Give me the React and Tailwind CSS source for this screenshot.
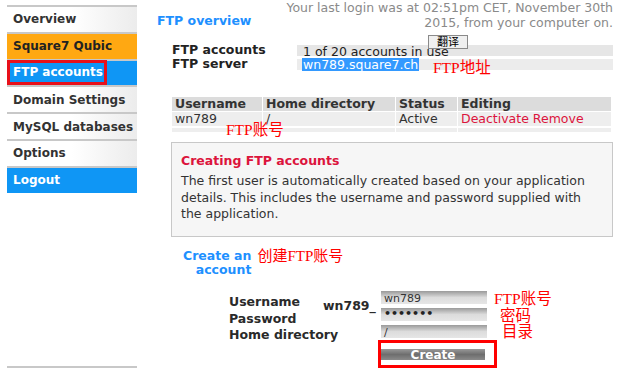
import React from "react";

const navItems = [
  { label: "Overview", tone: "plain" },
  { label: "Square7 Qubic", tone: "orange" },
  { label: "FTP accounts", tone: "blue", boxed: true },
  { label: "Domain Settings", tone: "plain" },
  { label: "MySQL databases", tone: "plain" },
  { label: "Options", tone: "plain" },
  { label: "Logout", tone: "blue" },
];

const toneClass = {
  plain: "bg-gradient-to-r from-white via-white to-[#ececec] text-[#333]",
  orange: "bg-[#ffa812] text-[#222]",
  blue: "bg-[#0f96f5] text-white",
};

const cjk = { fontFamily: '"Liberation Serif", "Noto Sans CJK SC", serif' };

export default function App() {
  return (
    <div
      className="relative w-[623px] h-[373px] overflow-hidden bg-white text-[13px] text-[#333]"
      style={{ fontFamily: '"DejaVu Sans", Verdana, sans-serif' }}
    >
      <div className="flex">
        {/* Sidebar */}
        <div className="ml-[7px] mt-[5px] w-[130px] shrink-0 border-b-2 border-[#c8c8c8]">
          {navItems.map((item) => (
            <div
              key={item.label}
              className={`h-[26.8px] border-t-2 border-[#c8c8c8] flex items-center pl-[6px] font-bold text-[12px] ${toneClass[item.tone]}`}
            >
              <span
                className={
                  item.boxed
                    ? "outline-[3px] outline outline-[#e8101a] -ml-[3px] pl-[3px] pr-[1px] leading-[19px]"
                    : ""
                }
              >
                {item.label}
              </span>
            </div>
          ))}
        </div>

        {/* Main */}
        <div className="relative flex-1 pl-[20px] pr-[10px]">
          <div className="flex items-end justify-between">
            <h1 className="text-[#1e90ff] font-bold text-[12.5px] mb-[-1px]">FTP overview</h1>
            <p className="text-right text-[#8a8a8a] leading-[15px] text-[12.5px]">
              Your last login was at 02:51pm CET, November 30th
              <br />
              2015, from your computer on.
            </p>
          </div>

          <div className="mt-[15px] ml-[15px] flex flex-col gap-[3px] text-[12.5px]">
            <div className="flex items-center h-[11px]">
              <span className="w-[125px] font-bold text-[#222]">FTP accounts</span>
              <div className="flex-1 bg-[#e6e6e6] h-[11px] leading-[13px] pl-[6px] text-[#222]">
                1 of 20 accounts in use
              </div>
            </div>
            <div className="flex items-center h-[11px]">
              <span className="w-[125px] font-bold text-[#222]">FTP server</span>
              <div className="flex-1 bg-[#ececec] h-[11px] leading-[13px] pl-[5px] flex">
                <span className="bg-[#3399ff] text-white px-[1px] leading-[13px] h-[13px] -mt-[1px]">
                  wn789.square7.ch
                </span>
              </div>
            </div>
          </div>

          <button className="absolute left-[291px] top-[35px] w-[40px] h-[14px] border border-[#8a8a8a] bg-[#f0f0f0] text-[11px] leading-[12px] text-black" style={cjk}>
            翻译
          </button>
          <span className="absolute left-[296px] top-[56px] text-[#ff0000] text-[15.5px]" style={cjk}>
            FTP地址
          </span>

          {/* Accounts table */}
          <div className="relative mt-[27px] ml-[15px] mr-[2px] text-[12.5px]">
            <div className="grid grid-cols-[90px_132px_61px_1fr] gap-x-[1px] leading-[14px]">
              <div className="bg-[#dcdcdc] font-bold pl-[3px]">Username</div>
              <div className="bg-[#dcdcdc] font-bold pl-[3px]">Home directory</div>
              <div className="bg-[#dcdcdc] font-bold pl-[3px]">Status</div>
              <div className="bg-[#dcdcdc] font-bold pl-[3px]">Editing</div>
              <div className="bg-[#eeeeee] pl-[3px] mt-[1px]">wn789</div>
              <div className="bg-[#eeeeee] pl-[3px] mt-[1px]">/</div>
              <div className="bg-[#eeeeee] pl-[3px] mt-[1px]">Active</div>
              <div className="bg-[#eeeeee] pl-[3px] mt-[1px] text-[#dc143c]">Deactivate Remove</div>
              <div className="bg-[#eeeeee] h-[4px] mt-[2px]" />
              <div className="bg-[#eeeeee] h-[4px] mt-[2px]" />
              <div className="bg-[#eeeeee] h-[4px] mt-[2px]" />
              <div className="bg-[#eeeeee] h-[4px] mt-[2px]" />
            </div>
            <span className="absolute left-[54px] top-[21px] text-[#ff0000] text-[15.5px]" style={cjk}>
              FTP账号
            </span>
          </div>

          {/* Info box */}
          <div className="mt-[10px] ml-[14px] h-[95px] border border-[#c8c8c8] bg-[#f6f6f6] px-[9px] pt-[10px]">
            <h2 className="text-[#dc143c] font-bold text-[12.5px] leading-[16px]">Creating FTP accounts</h2>
            <p className="mt-[4px] leading-[16.5px] text-[12.5px] text-[#333]">
              The first user is automatically created based on your application details. This includes the username and password supplied with the application.
            </p>
          </div>

          {/* Create form */}
          <div className="mt-[12px] ml-[26px] flex items-start gap-[6px]">
            <h3 className="text-[#1e90ff] font-bold text-[12.5px] leading-[14px] text-right">
              Create an
              <br />
              account
            </h3>
            <span className="text-[#ff0000] text-[15px] leading-[18px] -mt-[2px]" style={cjk}>
              创建FTP账号
            </span>
          </div>

          <div className="mt-[14px] ml-[72px] flex text-[12.5px]">
            <div className="flex flex-col font-bold leading-[16.5px] pt-[3px] w-[94px] whitespace-nowrap text-[#2a2a2a]">
              <span>Username</span>
              <span>Password</span>
              <span>Home directory</span>
            </div>
            <div className="font-bold pt-[6px] w-[58px] text-[#2a2a2a]">wn789_</div>
            <div className="flex flex-col">
              <div className="flex flex-col gap-[4px]">
                <div className="w-[106px] h-[13px] overflow-hidden bg-gradient-to-b from-[#9a9a9a] via-[#dcdcdc] to-[#e6e6e6] text-[11px] leading-[15px] pl-[3px] text-[#333]">wn789</div>
                <div className="w-[106px] h-[13px] overflow-hidden bg-gradient-to-b from-[#9a9a9a] via-[#dcdcdc] to-[#e6e6e6] text-[11px] leading-[12px] pl-[3px] font-bold text-[#222]">•••••••</div>
                <div className="w-[106px] h-[13px] overflow-hidden bg-gradient-to-b from-[#9a9a9a] via-[#dcdcdc] to-[#e6e6e6] text-[11px] leading-[15px] pl-[3px] text-[#333]">/</div>
              </div>
              <div className="mt-[2px] -ml-[3px] w-[119px] h-[28px] border-[3px] border-[#ff0000] pt-[3px]">
                <button className="w-[104px] h-[11px] bg-gradient-to-b from-[#999] via-[#6e6e6e] to-[#8a8a8a] text-white font-bold text-[12px] leading-[12px]">
                  Create
                </button>
              </div>
            </div>
            <div className="-ml-[3px] flex flex-col items-start text-[#ff0000] text-[15.5px] leading-[16.5px]" style={cjk}>
              <span>FTP账号</span>
              <span className="ml-[6px]">密码</span>
              <span className="ml-[8px]">目录</span>
            </div>
          </div>
        </div>
      </div>
    </div>
  );
}
